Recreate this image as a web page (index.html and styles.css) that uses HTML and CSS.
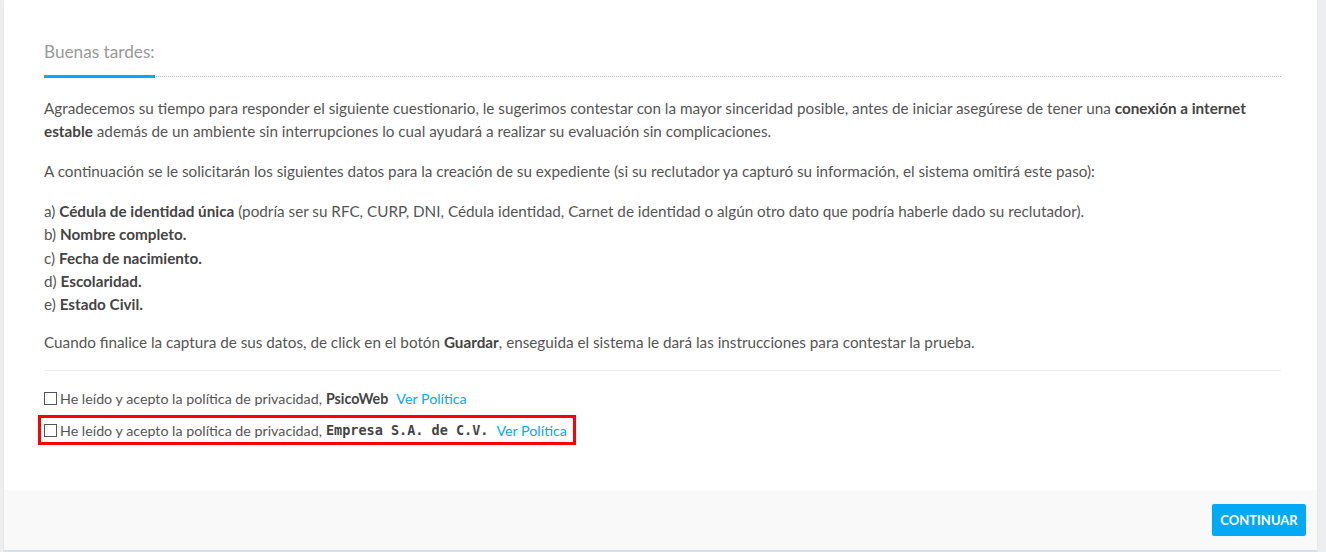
FILE: index.html
```html
<!DOCTYPE html>
<html lang="es">
<head>
  <meta charset="UTF-8">
  <meta name="viewport" content="width=device-width, initial-scale=1.0">
  <title>Bienvenida</title>
  <link rel="stylesheet" href="styles.css">
</head>
<body>
  <div class="box">
    <div class="box-body">
      <h3 class="box-title"><span>Buenas tardes:</span></h3>

      <p>Agradecemos su tiempo para responder el siguiente cuestionario, le sugerimos contestar con la mayor sinceridad posible, antes de iniciar asegúrese de tener una <b>conexión a internet estable</b> además de un ambiente sin interrupciones lo cual ayudará a realizar su evaluación sin complicaciones.</p>

      <p>A continuación se le solicitarán los siguientes datos para la creación de su expediente (si su reclutador ya capturó su información, el sistema omitirá este paso):</p>

      <p class="list">
        a) <b>Cédula de identidad única</b> (podría ser su RFC, CURP, DNI, Cédula identidad, Carnet de identidad o algún otro dato que podría haberle dado su reclutador).<br>
        b) <b>Nombre completo.</b><br>
        c) <b>Fecha de nacimiento.</b><br>
        d) <b>Escolaridad.</b><br>
        e) <b>Estado Civil.</b>
      </p>

      <p class="last">Cuando finalice la captura de sus datos, de click en el botón <b>Guardar</b>, enseguida el sistema le dará las instrucciones para contestar la prueba.</p>

      <hr>

      <div class="check-row">
        <label><input type="checkbox"> He leído y acepto la política de privacidad, <b>PsicoWeb</b></label>
        <a href="#">Ver Política</a>
      </div>
      <div class="check-row highlight">
        <label><input type="checkbox"> He leído y acepto la política de privacidad, <b class="company">Empresa S.A. de C.V.</b></label>
        <a href="#">Ver Política</a>
      </div>
    </div>
    <div class="box-footer">
      <button class="btn-continue">Continuar</button>
    </div>
  </div>
</body>
</html>
```

FILE: styles.css
```css
html, body {
  height: 100%;
}
body {
  margin: 0;
  padding: 0 9px 0 4px;
  background-color: #eceeef;
  font-family: Lato, "Open Sans", sans-serif;
  font-size: 15.25px;
  color: #555;
  box-sizing: border-box;
}
.box {
  background: #fff;
  min-height: 550px;
  border-bottom: 2px solid #d8e0e8;
  display: flex;
  flex-direction: column;
  box-shadow: 0 1px 2px rgba(0, 0, 0, 0.08);
}
.box-body {
  flex: 1;
  padding: 40px 36px 0 40px;
}
.box-title {
  margin: 0 0 20px;
  border-bottom: 1px dotted #bbb;
  font-size: 17.2px;
  font-weight: normal;
  color: #999;
  line-height: 24px;
}
.box-title span {
  display: inline-block;
  padding-bottom: 11px;
  border-bottom: 3px solid #03a9f4;
  margin-bottom: -2px;
}
p {
  margin: 0 0 17px;
  line-height: 23px;
}
p.list {
  line-height: 23.25px;
  margin-bottom: 15px;
}
p.last {
  margin-bottom: 16px;
}
b {
  color: #444;
}
hr {
  border: 0;
  border-top: 1px solid #eee;
  margin: 0 0 16px;
}
.check-row {
  display: flex;
  align-items: center;
  gap: 8px;
  height: 22px;
  margin-bottom: 6px;
  font-size: 14.25px;
}
.check-row.highlight {
  width: fit-content;
  margin-left: -6px;
  padding: 0 6px 0 3px;
  border: 3px solid #ff0000;
  height: 24px;
}
.check-row label {
  display: flex;
  align-items: center;
}
.check-row input[type="checkbox"] {
  appearance: none;
  -webkit-appearance: none;
  width: 13px;
  height: 13px;
  margin: 0 3px 0 0;
  border: 1px solid #555;
  background: #fff;
}
.check-row b {
  margin-left: 4px;
}
.company {
  font-family: "DejaVu Sans Mono", monospace;
  font-size: 13.5px;
}
.check-row a {
  color: #03a9f4;
  text-decoration: none;
}
.box-footer {
  background: #f9f9f9;
  height: 60px;
  display: flex;
  align-items: center;
  justify-content: flex-end;
  padding: 0 11px;
}
.btn-continue {
  background: #03a9f4;
  color: #fff;
  border: none;
  border-radius: 2px;
  font-family: inherit;
  font-weight: bold;
  font-size: 13px;
  text-transform: uppercase;
  width: 94px;
  height: 32px;
  cursor: pointer;
}
```
